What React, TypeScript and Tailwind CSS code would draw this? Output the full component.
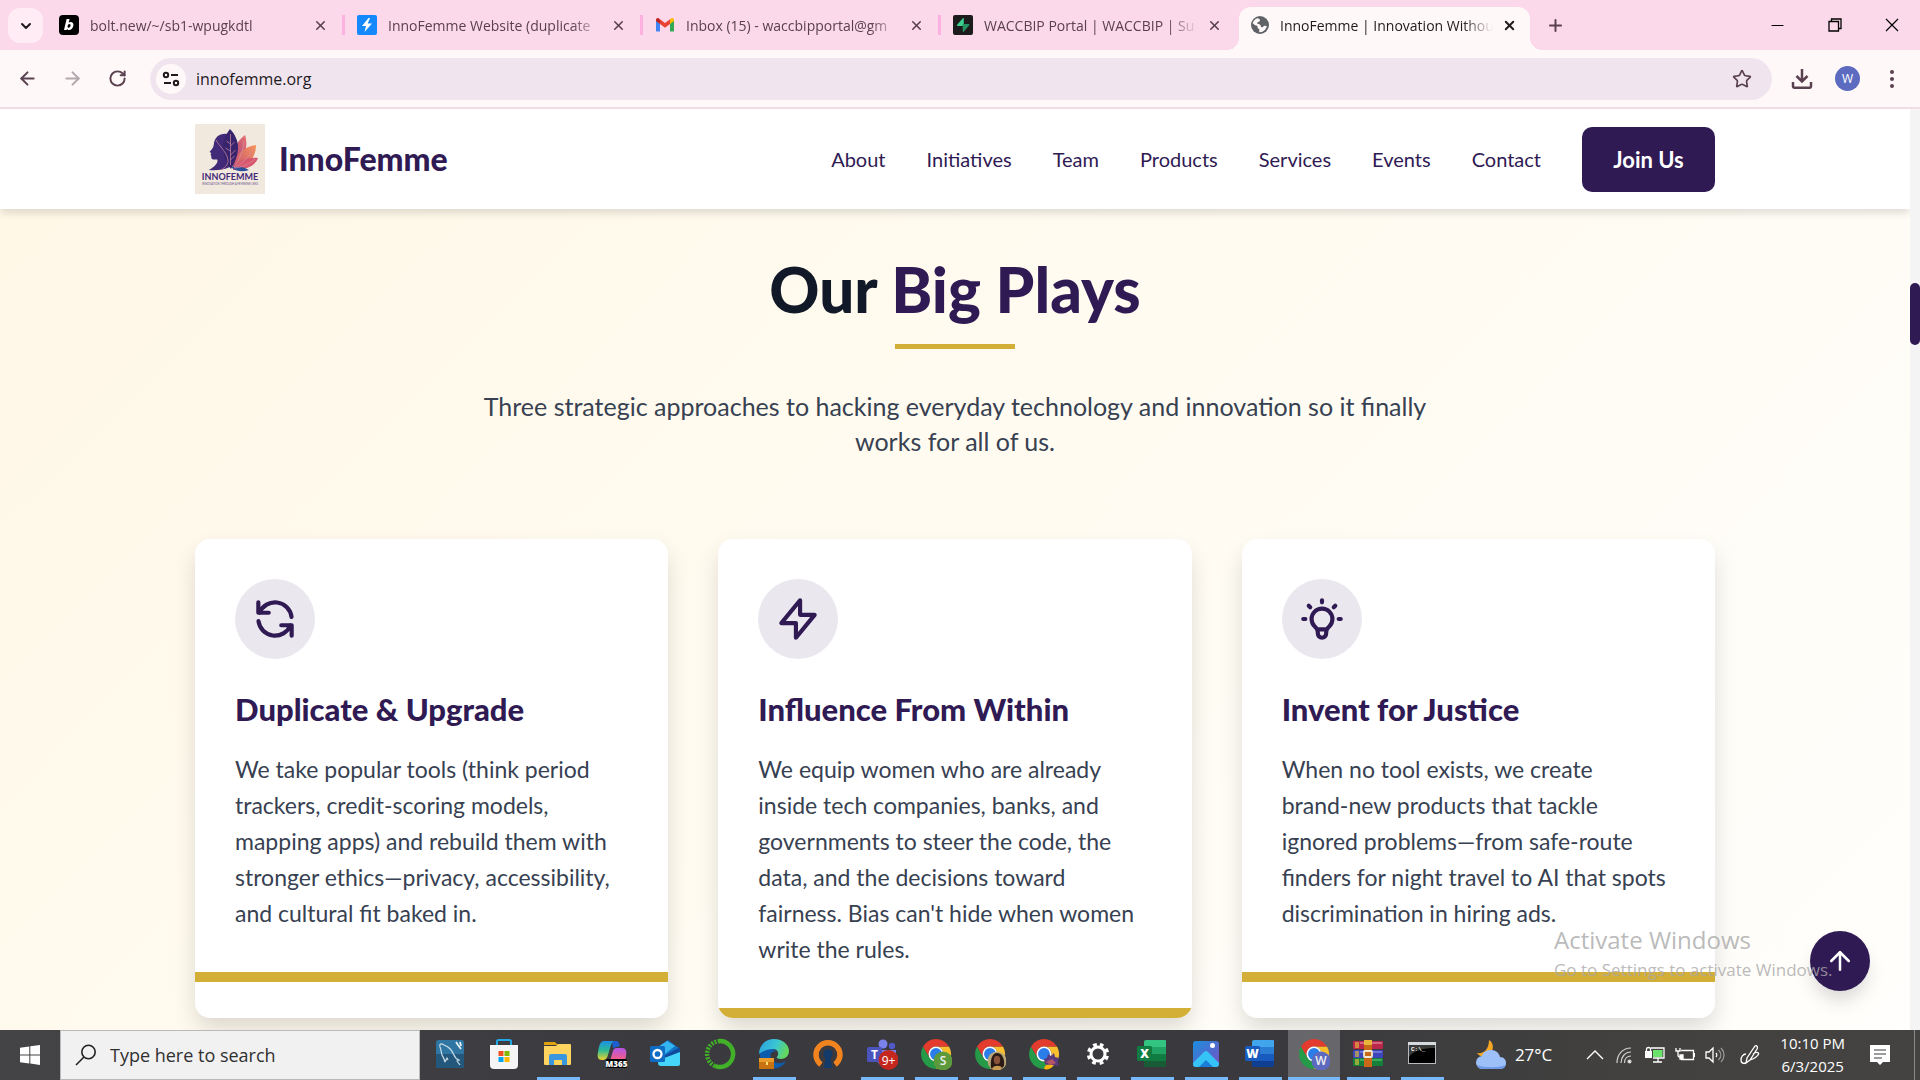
import React from "react";
import { ArrowLeft, ArrowRight, ArrowUp, ChevronDown, Minus, Plus, RotateCw, Star, X } from "lucide-react";

type IconProps = { children?: React.ReactNode };

/* ---------- Browser chrome ---------- */

function BoltFavicon() {
  return (
    <svg viewBox="0 0 20 20" className="size-5 shrink-0">
      <rect width="20" height="20" rx="4" fill="#000" />
      <path
        fill="#fff"
        fillRule="evenodd"
        d="M7.6 4h3l-.9 3.6c.6-.5 1.3-.7 2-.7 1.900 0 3 1.300 2.700 3.600-.4 2.700-2.200 4.500-4.400 4.500-.9 0-1.600-.3-2-.9l-.3.800H5L7.600 4zm2.900 5c-.9 0-1.700.8-1.900 2-.2 1.100.2 1.800 1 1.800.9 0 1.700-.8 1.900-2 .2-1.100-.2-1.800-1-1.800z"
      />
    </svg>
  );
}

function FlashFavicon() {
  return (
    <svg viewBox="0 0 20 20" className="size-5 shrink-0">
      <rect width="20" height="20" rx="2" fill="#1488fc" />
      <path fill="#fff" d="M11.500 3 5 11h4l-1.500 6L15 8.500h-4.300L13 3z" />
    </svg>
  );
}

function GmailFavicon() {
  return (
    <svg viewBox="0 0 20 20" className="size-5 shrink-0">
      <path fill="#4285f4" d="M1 5.500v10.200c0 .5.400.9.900.9H5V8z" />
      <path fill="#34a853" d="M19 5.500v10.200c0 .5-.4.900-.9.900H15V8z" />
      <path fill="#fbbc04" d="M15 4.500V9l4-3V5c0-1.600-1.800-2.400-3-1.500z" />
      <path fill="#c5221f" d="M1 5v1l4 3V4.500L4 3.500C2.800 2.600 1 3.400 1 5z" />
      <path fill="#ea4335" d="M5 9V4.200l5 3.800 5-3.800V9l-5 3.800z" />
    </svg>
  );
}

function SupabaseFavicon() {
  return (
    <svg viewBox="0 0 20 20" className="size-5 shrink-0">
      <rect width="20" height="20" rx="2" fill="#1c1c1c" />
      <path fill="#3ecf8e" d="M10.800 3.500v7.500H4.700c-.7 0-1-.8-.6-1.300l5.700-6.500c.3-.4 1-.2 1 .3z" />
      <path fill="#249361" d="M9.700 16.500V9h6c.7 0 1 .8.600 1.300l-5.600 6.500c-.3.400-1 .2-1-.3z" />
    </svg>
  );
}

function GlobeFavicon() {
  return (
    <svg viewBox="0 0 20 20" className="size-5 shrink-0">
      <circle cx="10" cy="10" r="9" fill="#5f6368" />
      <path
        fill="#fff8f8"
        d="M2.700 8.300c.6-2.300 2.300-4.200 4.500-5l1.900.4.9 1.200-.5 1.700-1.900.6-.4 1.500 1.700.4 1.800 1.200.2 1.700 1.800.2 1.400-1.500 2.700.3c-.5 3.300-3.300 6-6.900 6.300l-.8-.7.300-2.200-1.700-1.500-.4-2.200-2.200-.4z"
      />
    </svg>
  );
}

const tabs = [
  { title: "bolt.new/~/sb1-wpugkdtl", icon: <BoltFavicon /> },
  { title: "InnoFemme Website (duplicate", icon: <FlashFavicon /> },
  { title: "Inbox (15) - waccbipportal@gm", icon: <GmailFavicon /> },
  { title: "WACCBIP Portal | WACCBIP | Su", icon: <SupabaseFavicon /> },
];

function TabTitle({ children }: IconProps) {
  return (
    <span className="min-w-0 flex-1 text-left whitespace-nowrap [mask-image:linear-gradient(to_right,#000_86%,transparent)]">
      {children}
    </span>
  );
}

function TabStrip() {
  return (
    <div className="flex h-[50px] shrink-0 items-stretch bg-[#fbd9ea] text-[14px] text-[#5a414f]">
      <button aria-label="Search tabs" className="mt-2 mr-1 ml-2 grid size-[35px] shrink-0 place-items-center rounded-xl bg-[#ffecf5] text-[#1f1a1d]">
        <ChevronDown size={16} strokeWidth={3} />
      </button>
      {tabs.map((t) => (
        <div key={t.title} className="flex w-[298px] items-center pl-3">
          <button className="flex min-w-0 flex-1 items-center gap-[11px]">
            {t.icon}
            <TabTitle>{t.title}</TabTitle>
          </button>
          <button aria-label="Close tab" className="ml-1 grid size-6 place-items-center">
            <X size={15} strokeWidth={2.500} />
          </button>
          <span className="ml-[10px] h-5 w-[3px] bg-[#fdb1e0] [div:nth-of-type(4)>&]:invisible" />
        </div>
      ))}
      <div className="relative mt-[7px] flex w-[291px] items-center rounded-t-xl bg-[#fff8f8] pr-[9px] pb-[7px] pl-[11px] text-[#1f1a1d]">
        <span className="absolute bottom-0 -left-3 size-3 bg-[radial-gradient(circle_at_0_0,transparent_12px,#fff8f8_12px)]" />
        <span className="absolute -right-3 bottom-0 size-3 bg-[radial-gradient(circle_at_100%_0,transparent_12px,#fff8f8_12px)]" />
        <button className="flex min-w-0 flex-1 items-center gap-[10px]">
          <GlobeFavicon />
          <TabTitle>InnoFemme | Innovation Withou</TabTitle>
        </button>
        <button aria-label="Close tab" className="ml-1 grid size-6 place-items-center">
          <X size={15} strokeWidth={3} />
        </button>
      </div>
      <button aria-label="New tab" className="ml-[13px] grid w-6 place-items-center">
        <Plus size={19} strokeWidth={2.500} />
      </button>
      <div className="ml-auto flex items-center text-black">
        <button aria-label="Minimize" className="grid w-[57px] place-items-center">
          <Minus size={19} strokeWidth={1.300} />
        </button>
        <button aria-label="Restore" className="grid w-[57px] place-items-center">
          <svg viewBox="0 0 14 14" className="size-[14px]" fill="none" stroke="currentColor" strokeWidth="1.300">
            <path d="M1 3.500h9.500V13H1zM3.500 3.500V1H13v9.500h-2.500" />
          </svg>
        </button>
        <button aria-label="Close" className="grid w-[57px] place-items-center">
          <svg viewBox="0 0 14 14" className="size-[14px]" fill="none" stroke="currentColor" strokeWidth="1.200">
            <path d="M1 1l12 12M13 1 1 13" />
          </svg>
        </button>
      </div>
    </div>
  );
}

function Toolbar() {
  return (
    <div className="flex h-[59px] shrink-0 items-center border-b-2 border-[#f1dde5] bg-[#fff8f8] text-[#5a414f]">
      <button aria-label="Back" className="ml-[5px] grid w-[45px] place-items-center">
        <ArrowLeft size={21} strokeWidth={2.300} />
      </button>
      <button aria-label="Forward" className="grid w-[45px] place-items-center text-[#b3a8ad]">
        <ArrowRight size={21} strokeWidth={2.300} />
      </button>
      <button aria-label="Reload" className="grid w-[45px] place-items-center">
        <RotateCw size={19} strokeWidth={2.500} />
      </button>
      <div className="ml-[10px] flex h-[42px] flex-1 items-center rounded-full bg-[#f0e5ef] pr-5 pl-[6px]">
        <button aria-label="View site information" className="grid size-[30px] place-items-center rounded-full bg-[#fff8f8] text-[#1f1a1d]">
          <svg viewBox="0 0 18 18" className="size-[18px]" fill="none" stroke="currentColor" strokeWidth="2">
            <circle cx="4" cy="5" r="2.200" />
            <path d="M9 5h7M2 13h7" />
            <circle cx="14" cy="13" r="2.200" />
          </svg>
        </button>
        <input
          aria-label="Address and search bar"
          defaultValue="innofemme.org"
          className="ml-[10px] min-w-0 flex-1 bg-transparent text-[16px] text-[#1f1a1d] outline-none"
        />
        <button aria-label="Bookmark this tab">
          <Star size={20} strokeWidth={2} />
        </button>
      </div>
      <button aria-label="Downloads" className="ml-[19px]">
        <svg viewBox="0 0 22 22" className="size-[22px]" fill="none" stroke="currentColor" strokeWidth="2.500">
          <path d="M11 1v12M5.500 8l5.500 5.500L16.500 8M2 14v4.500c0 .8.500 1.200 1.200 1.200h15.600c.7 0 1.200-.4 1.200-1.200V14" />
        </svg>
      </button>
      <button aria-label="Profile" className="ml-[22px] grid size-[25px] place-items-center rounded-full bg-[#5c6bc0] text-[12px] text-white">
        W
      </button>
      <button aria-label="More" className="mr-[26px] ml-[30px] flex flex-col gap-[3px]">
        <span className="size-1 rounded-full bg-current" />
        <span className="size-1 rounded-full bg-current" />
        <span className="size-1 rounded-full bg-current" />
      </button>
    </div>
  );
}

/* ---------- Website ---------- */

function Logo() {
  return (
    <svg viewBox="0 0 70 70" className="size-[70px]" role="img" aria-label="InnoFemme logo">
      <defs>
        <linearGradient id="coral" x1="0" y1="1" x2="1" y2="0">
          <stop offset="0" stopColor="#8a3a7c" />
          <stop offset="1" stopColor="#ee7470" />
        </linearGradient>
        <linearGradient id="orange" x1="0" y1="1" x2="1" y2="0">
          <stop offset="0" stopColor="#c04a72" />
          <stop offset="1" stopColor="#f7965a" />
        </linearGradient>
      </defs>
      <rect width="70" height="70" fill="#f2e9de" />
      <path fill="url(#coral)" d="M50 11c3 9 2 22-12 34-3-13 2-27 12-34z" />
      <path fill="url(#orange)" d="M61 21c0 12-7 21-23 25 1-14 9-23 23-25z" />
      <path fill="#d8586f" d="M63 34c-3 8-12 12-25 12 5-9 13-13 25-12z" />
      <path fill="#2d4f9a" d="M36 43c8-1 14 0 18 3-6 2-13 2-18-3z" />
      <path
        fill="#432a78"
        d="M32 10c-7-1-12 3-13 9-.3 3-1 5-2 6l-2.500 3 1.800 1-.8 1.500.8 1.500c-.3 2 .4 3.500 2 3.500h4c1 3-2 7-8.500 10.500 7 .7 15 0 21-3 2-8 2-25-2.800-33z"
      />
      <path fill="#37246d" d="M35 5c5 5 8 12 8 18 0 8-3 15-7 22-5-6-8-13-8-22 0-7 3-13 7-18z" />
      <path
        fill="none"
        stroke="#d88ca3"
        strokeWidth=".7"
        d="M21 16c3 6 11 12 12 20 .3 4-2 7-7 10M35.500 10v31M35.500 20l-4-3M35.500 27l-5-3M35.500 22l4-4M35.500 31l5-5M35.500 36l4-4M49 17c-1 11-5 20-10 26M58 25c-5 9-11 15-19 19M60 35c-6 5-12 8-20 9"
      />
      <text x="35" y="56" textAnchor="middle" fontFamily="Lato" fontWeight="700" fontSize="9" fill="#432a78">
        INNOFEMME
      </text>
      <text x="35" y="61" textAnchor="middle" fontFamily="Lato" fontWeight="400" fontSize="2.800" fill="#6a5790">
        INNOVATION THROUGH A FEMININE LENS
      </text>
    </svg>
  );
}

const links = ["About", "Initiatives", "Team", "Products", "Services", "Events", "Contact"];

function SiteHeader() {
  return (
    <header className="relative z-10 bg-white shadow-[0_5px_8px_-1px_rgba(0,0,0,0.13)]">
      <div className="mx-auto flex h-[100px] max-w-[1600px] items-center px-10 text-[#301a54]">
        <a href="#home" className="flex items-center gap-[14px] text-[32px] font-black">
          <Logo />
          InnoFemme
        </a>
        <nav className="ml-auto flex items-center gap-[41px] text-[20px]">
          {links.map((l) => (
            <a key={l} href={"#" + l.toLowerCase()}>
              {l}
            </a>
          ))}
          <a href="#join" className="grid h-[65px] w-[133px] place-items-center rounded-[10px] bg-[#301a54] text-[22px] font-bold text-white">
            Join Us
          </a>
        </nav>
      </div>
    </header>
  );
}

const plays = [
  {
    title: "Duplicate & Upgrade",
    lines: [
      "We take popular tools (think period",
      "trackers, credit-scoring models,",
      "mapping apps) and rebuild them with",
      "stronger ethics—privacy, accessibility,",
      "and cultural fit baked in.",
    ],
    path: "M4 4v5h.582m15.356 2A8.001 8.001 0 004.582 9m0 0H9m11 11v-5h-.581m0 0a8.003 8.003 0 01-15.357-2m15.357 2H15",
  },
  {
    title: "Influence From Within",
    lines: [
      "We equip women who are already",
      "inside tech companies, banks, and",
      "governments to steer the code, the",
      "data, and the decisions toward",
      "fairness. Bias can't hide when women",
      "write the rules.",
    ],
    path: "M13 10V3L4 14h7v7l9-11h-7z",
  },
  {
    title: "Invent for Justice",
    lines: [
      "When no tool exists, we create",
      "brand-new products that tackle",
      "ignored problems—from safe-route",
      "finders for night travel to AI that spots",
      "discrimination in hiring ads.",
    ],
    path: "M9.663 17h4.673M12 3v1m6.364 1.636l-.707.707M21 12h-1M4 12H3m3.343-5.657l-.707-.707m2.828 9.900a5 5 0 117.072 0l-.548.547A3.374 3.374 0 0014 18.469V19a2 2 0 11-4 0v-.531c0-.895-.356-1.754-.988-2.386l-.548-.547z",
  },
];

function BigPlays() {
  return (
    <section className="mx-auto max-w-[1600px] px-10 pt-[43px]">
      <h2 className="text-center text-[62px] leading-[75px] font-black text-[#111827]">
        Our <span className="text-[#301a54]">Big Plays</span>
      </h2>
      <div className="mx-auto mt-[17px] h-[5px] w-[120px] bg-[#d4af37]" />
      <p className="mt-10 text-center text-[25px] leading-[35px] text-[#374151]">
        Three strategic approaches to hacking everyday technology and innovation so it finally
        <br />
        works for all of us.
      </p>
      <div className="mt-20 grid grid-cols-3 gap-[50px]">
        {plays.map((p) => (
          <article key={p.title} className="overflow-hidden rounded-[15px] bg-white shadow-[0_12px_24px_-2px_rgba(0,0,0,0.15)]">
            <div className="p-10 pb-[41px]">
              <div className="grid size-20 place-items-center rounded-full bg-[#eae8ee]">
                <svg viewBox="0 0 24 24" className="size-[50px]" fill="none" stroke="#301a54" strokeWidth="2" strokeLinecap="round" strokeLinejoin="round">
                  <path d={p.path} />
                </svg>
              </div>
              <h3 className="mt-[30px] text-[31px] leading-[40px] font-black text-[#301a54]">{p.title}</h3>
              <p className="mt-[22px] text-[23px] leading-[36px] text-[#374151]">
                {p.lines.map((line) => (
                  <React.Fragment key={line}>
                    {line}
                    <br />
                  </React.Fragment>
                ))}
              </p>
            </div>
            <div className="h-[10px] bg-[#d4af37]" />
          </article>
        ))}
      </div>
    </section>
  );
}

function Website() {
  return (
    <main className="flex min-h-0 flex-1">
      <div className="relative min-w-0 flex-1 overflow-hidden bg-[linear-gradient(135deg,#fff7e6_0%,#fffbf0_45%,#fffefc_100%)] font-[Lato,sans-serif]">
        <SiteHeader />
        <BigPlays />
        <button aria-label="Back to top" className="absolute right-10 bottom-[39px] grid size-[60px] place-items-center rounded-full bg-[#301a54] text-white shadow-[0_12px_18px_-3px_rgba(0,0,0,0.15)]">
          <ArrowUp size={30} />
        </button>
        <div className="pointer-events-none absolute right-[72px] bottom-[47px] w-[284px] font-['Open_Sans',sans-serif] whitespace-nowrap text-[#a8a8a8]/80">
          <p className="text-[24px] leading-[34px]">Activate Windows</p>
          <p className="text-[17px] leading-[26px]">Go to Settings to activate Windows.</p>
        </div>
      </div>
      <div className="w-[10px] shrink-0 bg-[#f4f4f5] pt-[174px]">
        <div className="h-[62px] rounded-full bg-[#301a54]" />
      </div>
    </main>
  );
}

/* ---------- Taskbar ---------- */

function Svg({ children }: IconProps) {
  return (
    <svg viewBox="0 0 32 32" className="size-8" fill="none">
      {children}
    </svg>
  );
}

function ChromeMark({ children }: IconProps) {
  return (
    <Svg>
      <g transform="translate(1 1) scale(.625)">
        <path fill="#fbc02d" d="M24 12h20.800A24 24 0 0 1 24 48L34.390 30A12 12 0 0 0 24 12z" />
        <path fill="#259a48" d="M13.610 30 3.220 12A24 24 0 0 0 24 48L34.390 30A12 12 0 0 1 13.610 30z" />
        <path fill="#e33b2e" d="M3.220 12A24 24 0 0 1 44.780 12H24A12 12 0 0 0 13.610 30z" />
        <circle cx="24" cy="24" r="12" fill="#fff" />
        <circle cx="24" cy="24" r="9.500" fill="#2b7de9" />
      </g>
      {children}
    </Svg>
  );
}

function Badge({ color, label }: { color: string; label: string }) {
  return (
    <>
      <circle cx="23" cy="23" r="9.500" fill={color} />
      <text x="23" y="27" textAnchor="middle" fontFamily="Open Sans" fontSize="12" fontWeight="600" fill="#f0f0f0">
        {label}
      </text>
    </>
  );
}

function OfficeMark({ dark, mid, light, top, label }: { dark: string; mid: string; light: string; top: string; label: string }) {
  return (
    <Svg>
      <path fill={top} d="M8 4a2 2 0 0 1 2-2h19a1 1 0 0 1 1 1v7H8z" />
      <path fill={light} d="M8 9h22v7H8z" />
      <path fill={mid} d="M8 16h22v7H8z" />
      <path fill={dark} d="M8 23h22v5a1 1 0 0 1-1 1H9a1 1 0 0 1-1-1z" />
      <rect x="1" y="8" width="15" height="15" rx="1.500" fill={mid} />
      <text x="8.500" y="20" textAnchor="middle" fontFamily="Open Sans" fontSize="12" fontWeight="800" fill="#fff">
        {label}
      </text>
    </Svg>
  );
}

const apps: { name: string; open?: boolean; active?: boolean; icon: React.ReactNode }[] = [
  {
    name: "MySQL Workbench",
    icon: (
      <Svg>
        <rect x="2" y="2" width="28" height="28" rx="2.500" fill="#2f76a3" />
        <path fill="#23587c" d="M2 16h28v12a2 2 0 0 1-2 2H4a2 2 0 0 1-2-2z" />
        <path stroke="#c9dde8" strokeWidth="1.200" d="M11 24c-1-4-2-5-3-7-1-3-1-6-2-8-1-3 1-4 4-2 6 2 8 6 10 10 1 3 2 4 5 5l-2 1 3 4M11 24l2-4 1 2" />
        <path stroke="#e8f0f4" strokeWidth="1.800" d="m22 4 2 3 3 4M26 4l1 4" />
      </Svg>
    ),
  },
  {
    name: "Microsoft Store",
    icon: (
      <Svg>
        <path stroke="#22a7e8" strokeWidth="2" d="M9 8V3.500C9 2.700 9.500 2 10.500 2h11c1 0 1.500.7 1.500 1.500V8" />
        <path fill="#f5f5f5" d="M2 7h28v20a4 4 0 0 1-4 4H6a4 4 0 0 1-4-4z" />
        <path fill="#f25022" d="M10.500 13h5v5h-5z" />
        <path fill="#7fba00" d="M16.500 13h5v5h-5z" />
        <path fill="#00a4ef" d="M10.500 19h5v5h-5z" />
        <path fill="#ffb900" d="M16.500 19h5v5h-5z" />
      </Svg>
    ),
  },
  {
    name: "File Explorer",
    open: true,
    icon: (
      <Svg>
        <path fill="#e0a30c" d="M2 5a1 1 0 0 1 1-1h10l3 3H2z" />
        <path fill="#ffd45e" d="M2 8h12l2-2h12a1 1 0 0 1 1 1v19a1 1 0 0 1-1 1H3a1 1 0 0 1-1-1z" />
        <path fill="#3a96dd" d="M7 18a2 2 0 0 1 2-2h14a2 2 0 0 1 2 2v9h-5v-5h-8v5H7z" />
      </Svg>
    ),
  },
  {
    name: "Microsoft 365 Copilot",
    icon: (
      <Svg>
        <defs>
          <linearGradient id="cpa" x1="0" y1="0" x2="0" y2="1">
            <stop offset="0" stopColor="#1b8fe8" />
            <stop offset=".5" stopColor="#2dbb92" />
            <stop offset="1" stopColor="#f0d32c" />
          </linearGradient>
          <linearGradient id="cpb" x1="0" y1="0" x2="0" y2="1">
            <stop offset="0" stopColor="#b456e8" />
            <stop offset=".6" stopColor="#f05c8c" />
            <stop offset="1" stopColor="#fa8a4a" />
          </linearGradient>
        </defs>
        <path fill="#1c5fd0" d="M16 3h4c2 0 3 1 4 5l-7 2z" />
        <path fill="url(#cpa)" d="M8 3h10c-3 1-4 8-6 14-1 4-3 5-6 5-4 0-5-3-4-8C3 8 4 3 8 3z" />
        <path fill="url(#cpb)" d="M20 10h6c4 0 5 3 4 8-1 6-3 10-8 10H9c4-1 5-5 7-12 1-4 2-6 4-6z" />
        <rect x="10" y="21" width="21" height="9" rx="1.500" fill="#000" />
        <text x="20.500" y="28.500" textAnchor="middle" fontFamily="Open Sans" fontSize="8" fontWeight="800" fill="#fff">
          M365
        </text>
      </Svg>
    ),
  },
  {
    name: "Outlook",
    icon: (
      <Svg>
        <path fill="#1373c8" d="m5 11 13-9 12 9v6H5z" />
        <path fill="#35b5f0" d="M5 11 17 3l8 5-15 12z" />
        <path fill="#0f4a9c" d="m12 19 18-10v6L16 23z" />
        <path fill="#46d5fa" d="M9 22 30 14v12a2 2 0 0 1-2 2H11a3 3 0 0 1-3-3z" />
        <rect x="0" y="8" width="15" height="16" rx="1.500" fill="#0f6cc4" />
        <circle cx="7.500" cy="16" r="4" stroke="#fff" strokeWidth="2.300" />
      </Svg>
    ),
  },
  {
    name: "Anaconda",
    icon: (
      <Svg>
        <path stroke="#43b02a" strokeWidth="4.500" d="M14 3.200A13 13 0 1 1 11 28" />
        <path stroke="#43b02a" strokeWidth="4.500" strokeDasharray="2 1.300" d="M11 28A13 13 0 0 1 14 3.200" />
      </Svg>
    ),
  },
  {
    name: "Edge",
    open: true,
    icon: (
      <Svg>
        <defs>
          <linearGradient id="edge" x1="0" y1="0" x2="1" y2=".3">
            <stop offset="0" stopColor="#2a9fe0" />
            <stop offset=".6" stopColor="#3ac6d4" />
            <stop offset="1" stopColor="#62d860" />
          </linearGradient>
        </defs>
        <path fill="#0d5cae" d="M2 14c4-5 13-6 16 0-5-2-8 4-3 9 3 3 9 3 13 0-3 6-9 8-14 7C6 29 1 22 2 14z" />
        <path fill="url(#edge)" d="M1 16C1 7 8 1 16 1c9 0 15 6 15 12 0 5-4 8-8 8-3 0-5-1-4-2 3-4 0-8-4-8-5 0-10 2-14 5z" />
        <path fill="#c87312" d="M1 21h15v10H1z" />
        <path fill="#e89c2c" d="M1 20h15v4H1z" />
        <path fill="#ffe070" d="M8 24h2v3H8z" />
      </Svg>
    ),
  },
  {
    name: "OpenVPN",
    icon: (
      <Svg>
        <path stroke="#f28420" strokeWidth="5.500" d="M9 26.500a12 12 0 1 1 14 0" />
        <circle cx="16" cy="16" r="4.500" fill="#123a6b" />
        <path fill="#123a6b" d="M14 18h4l2 12h-8z" />
      </Svg>
    ),
  },
  {
    name: "Teams",
    open: true,
    icon: (
      <Svg>
        <circle cx="17" cy="6" r="4.500" fill="#7b83eb" />
        <circle cx="26" cy="8" r="3.200" fill="#5059c9" />
        <path fill="#7b83eb" d="M11 12h19v9c0 5-4 8-9 8s-9-3-10-7z" />
        <rect x="1" y="9" width="15" height="15" rx="1.500" fill="#4b53bc" />
        <text x="8.500" y="21" textAnchor="middle" fontFamily="Open Sans" fontSize="12" fontWeight="700" fill="#fff">
          T
        </text>
        <circle cx="22.500" cy="22" r="10" fill="#c4271d" />
        <text x="22.500" y="26.500" textAnchor="middle" fontFamily="Open Sans" fontSize="12" fill="#fff">
          9+
        </text>
      </Svg>
    ),
  },
  { name: "Chrome S", open: true, icon: <ChromeMark><Badge color="#5d9a3b" label="S" /></ChromeMark> },
  {
    name: "Chrome photo",
    open: true,
    icon: (
      <ChromeMark>
        <circle cx="23" cy="23" r="9.500" fill="#b9a778" />
        <path fill="#2a1a16" d="M17 30c-1-8 1-15 6-15s8 6 7 13l-3 3h-8z" />
        <ellipse cx="23" cy="22" rx="3.200" ry="4.200" fill="#8a5238" />
        <path fill="#c99a50" d="M18 31c1-4 9-4 10-1-3 3-7 3-10 1z" />
      </ChromeMark>
    ),
  },
  {
    name: "Chrome fish",
    open: true,
    icon: (
      <ChromeMark>
        <path fill="#5b3a7e" d="m16 21 3-1 1-4 3 2 3-3 1 4 4 1-1 4 1 4-5-1-4 1-5-2z" />
        <path fill="#b4566a" d="m18 24 6-3 4 4-5 2z" />
        <path fill="#fbb40e" d="M17 28c3-2 7-1 8 0-2 3-6 4-9 3z" />
      </ChromeMark>
    ),
  },
  {
    name: "Settings",
    open: true,
    icon: (
      <Svg>
        <circle cx="16" cy="16" r="7" stroke="#fff" strokeWidth="3" />
        <path stroke="#fff" strokeWidth="3.500" strokeDasharray="3.700 3.680" d="M16 6.600a9.400 9.400 0 1 1-.01 0" transform="rotate(11 16 16)" />
      </Svg>
    ),
  },
  { name: "Excel", open: true, icon: <OfficeMark top="#33c481" light="#21a366" mid="#107c41" dark="#185c37" label="X" /> },
  {
    name: "Photos",
    open: true,
    icon: (
      <Svg>
        <defs>
          <linearGradient id="photos" x1="0" y1="0" x2="1" y2="1">
            <stop offset="0" stopColor="#1a8fe0" />
            <stop offset="1" stopColor="#7a4fc0" />
          </linearGradient>
        </defs>
        <rect x="3" y="3" width="26" height="26" rx="3" fill="url(#photos)" />
        <path fill="#35c4f5" d="m3 25 11-11a3 3 0 0 1 4 0l11 11v1a3 3 0 0 1-3 3H6a3 3 0 0 1-3-3z" />
        <path fill="#1a7fd8" d="m9 29 7-7 7 7z" />
        <circle cx="22.500" cy="7.500" r="2.500" fill="#fff" />
      </Svg>
    ),
  },
  { name: "Word", open: true, icon: <OfficeMark top="#41a5ee" light="#2b7cd3" mid="#185abd" dark="#103f91" label="W" /> },
  { name: "Chrome W", open: true, active: true, icon: <ChromeMark><Badge color="#5c6bc0" label="W" /></ChromeMark> },
  {
    name: "WinRAR",
    open: true,
    icon: (
      <Svg>
        <rect x="1" y="3" width="30" height="8" rx="1" fill="#b8264a" />
        <rect x="1" y="12" width="30" height="8" rx="1" fill="#3d45b8" />
        <rect x="1" y="20" width="30" height="8" rx="1" fill="#16803a" />
        <path stroke="#e8c53a" strokeWidth="1.200" d="M4 4v6M6 4v6M4 13v6M6 13v6M4 21v6M6 21v6" />
        <path stroke="#f0a0b0" strokeWidth="1" d="M8 5h22" />
        <path stroke="#9aa0f0" strokeWidth="1" d="M8 14h22" />
        <path stroke="#60d080" strokeWidth="1" d="M8 22h22" />
        <path fill="#c8691a" d="M12 2h8v27h-8z" />
        <path fill="#e8b43a" d="M12 2h8v5h-8z" />
        <rect x="12" y="13" width="8" height="6" rx="1" stroke="#f0e8d0" strokeWidth="1.800" />
      </Svg>
    ),
  },
  {
    name: "Command Prompt",
    open: true,
    icon: (
      <Svg>
        <rect x="2.500" y="4.500" width="27" height="21" fill="#000" stroke="#b8bcc0" />
        <path fill="#d5dade" d="M2 4h28v3H2z" />
        <path fill="#3a3a3a" d="M3 7h26v3C18 10 8 12 3 19z" />
        <text x="5" y="13" fontFamily="Liberation Mono" fontSize="6" fontWeight="700" fill="#fff">
          C:\_
        </text>
      </Svg>
    ),
  },
];

function Tray() {
  return (
    <div className="ml-auto flex items-center text-[15px] text-white">
      <button aria-label="Weather" className="flex items-center gap-2 text-[17px]">
        <svg viewBox="0 0 32 32" className="size-8" fill="none">
          <path fill="#f5a623" d="M14 1c6 3 5 14-3 16-4 1-7 0-9-3 7 1 12-4 12-13z" />
          <path fill="#9dc0f8" d="M8 30a6.500 6.500 0 0 1-1-13c1-4 5-6 9-6 5 0 8 3 9 7 4 0 6 3 6 6s-2 6-6 6z" />
          <path fill="#6f9ae8" d="M2 26c1 3 3 4 6 4h17c3 0 5-2 6-4-8 3-21 3-29 0z" />
        </svg>
        27°C
      </button>
      <button aria-label="Show hidden icons" className="ml-[34px]">
        <svg viewBox="0 0 18 18" className="size-[18px]" fill="none" stroke="currentColor" strokeWidth="1.400">
          <path d="m1 13 8-8 8 8" />
        </svg>
      </button>
      <button aria-label="Network" className="ml-[11px]">
        <svg viewBox="0 0 18 18" className="size-[18px]" fill="none" stroke="#d0d0d0" strokeWidth="1.200">
          <path d="M2 17C2 8 8 2 16 2M6 17c0-6 4-11 10-11M9.500 17c0-4 2.500-7 6.500-7" />
          <circle cx="14.500" cy="15.500" r="1.500" fill="#fff" />
        </svg>
      </button>
      <button aria-label="Display" className="ml-3">
        <svg viewBox="0 0 20 20" className="size-5" fill="none">
          <path stroke="#fff" strokeWidth="1.300" d="M6 3h13v10H8M13 13v4M8 17h9" />
          <path fill="#6be36b" d="M8 5h9.500v7H8z" />
          <path fill="#fff" d="M0 6h7v7H0z" />
          <path stroke="#fff" strokeWidth="1.300" d="M1.500 6V4c0-2 4-2 4 0v2" />
        </svg>
      </button>
      <button aria-label="Battery" className="ml-[10px]">
        <svg viewBox="0 0 20 20" className="size-5" fill="none" stroke="#fff" strokeWidth="1.300">
          <path d="M6 5.500h12.500v9H6M19.500 8v4M1 3v3h4V3M3 6v4c0 1 1 2 2 2" />
          <path fill="#fff" d="M5 10h3v4H5z" />
        </svg>
      </button>
      <button aria-label="Volume" className="ml-[10px]">
        <svg viewBox="0 0 20 20" className="size-5" fill="none" stroke="#fff" strokeWidth="1.300">
          <path d="M1 7h3l4-4v14l-4-4H1zM11 8c1 1 1 3 0 4" />
          <path stroke="#9a9a9a" d="M13.500 5c3 3 3 7 0 10M16 3c4 4 4 10 0 14" />
        </svg>
      </button>
      <button aria-label="Windows Ink" className="ml-[15px]">
        <svg viewBox="0 0 20 20" className="size-5" fill="none" stroke="#fff" strokeWidth="1.300">
          <path d="M15 1c2-1 3 1 2 3l-7 11-4 3 1-5zM6 9c-3 0-5 3-5 6 0 4 4 4 6 2M13 9c4-3 7-1 5 1-2 3-5 4-8 5" />
        </svg>
      </button>
      <div className="ml-5 text-center leading-[23px]">
        <p>10:10 PM</p>
        <p>6/3/2025</p>
      </div>
      <button aria-label="Notifications" className="ml-[25px]">
        <svg viewBox="0 0 20 20" className="size-5">
          <path fill="#fff" d="M0 0h20v17h-7l-3 3-3-3H0z" />
          <path stroke="#3c3b3a" strokeWidth="1.200" d="M4 5h12M4 9h12M4 13h8" />
        </svg>
      </button>
      <span className="mr-[5px] ml-6 h-[50px] w-px bg-[#8a8a8a]" />
    </div>
  );
}

function Taskbar() {
  return (
    <footer className="flex h-[50px] shrink-0 items-center bg-[linear-gradient(to_right,#444345,#39393e_40%,#39393e_65%,#42413f_85%,#444341)]">
      <button aria-label="Start" className="grid w-[60px] place-items-center">
        <svg viewBox="0 0 20 20" className="size-5" fill="#fff">
          <path d="M0 2.700 9.300 1.400v8.100H0zM10.300 1.300 20 0v9.500h-9.700zM0 10.500h9.300v8.100L0 17.300zM10.300 10.500H20V20l-9.700-1.400z" />
        </svg>
      </button>
      <label className="flex h-full w-[360px] items-center gap-[13px] border border-[#b9b9b9] bg-[#f1f1f1] pl-[14px]">
        <svg viewBox="0 0 22 22" className="size-[22px]" fill="none" stroke="#222" strokeWidth="1.600">
          <circle cx="13.500" cy="8" r="6.700" />
          <path d="M9 13 1 21" />
        </svg>
        <input placeholder="Type here to search" className="w-[280px] bg-transparent text-[18px] text-[#303030] outline-none placeholder:text-[#303030]" />
      </label>
      <div className="ml-[3px] flex h-full">
        {apps.map((a) => (
          <button key={a.name} aria-label={a.name} className="flex w-[54px] flex-col items-center justify-between">
            <span className={a.active ? "grid h-[47px] w-[52px] place-items-center bg-[#67676b]" : "grid h-[47px] w-[52px] place-items-center"}>
              {a.icon}
            </span>
            {a.open && <span className={a.active ? "h-[3px] w-[52px] bg-[#76b9ff]" : "h-[3px] w-[43px] bg-[#76b9ff]"} />}
          </button>
        ))}
      </div>
      <Tray />
    </footer>
  );
}

export default function App() {
  return (
    <div className="flex h-screen flex-col overflow-hidden font-['Open_Sans',sans-serif]">
      <TabStrip />
      <Toolbar />
      <Website />
      <Taskbar />
    </div>
  );
}
